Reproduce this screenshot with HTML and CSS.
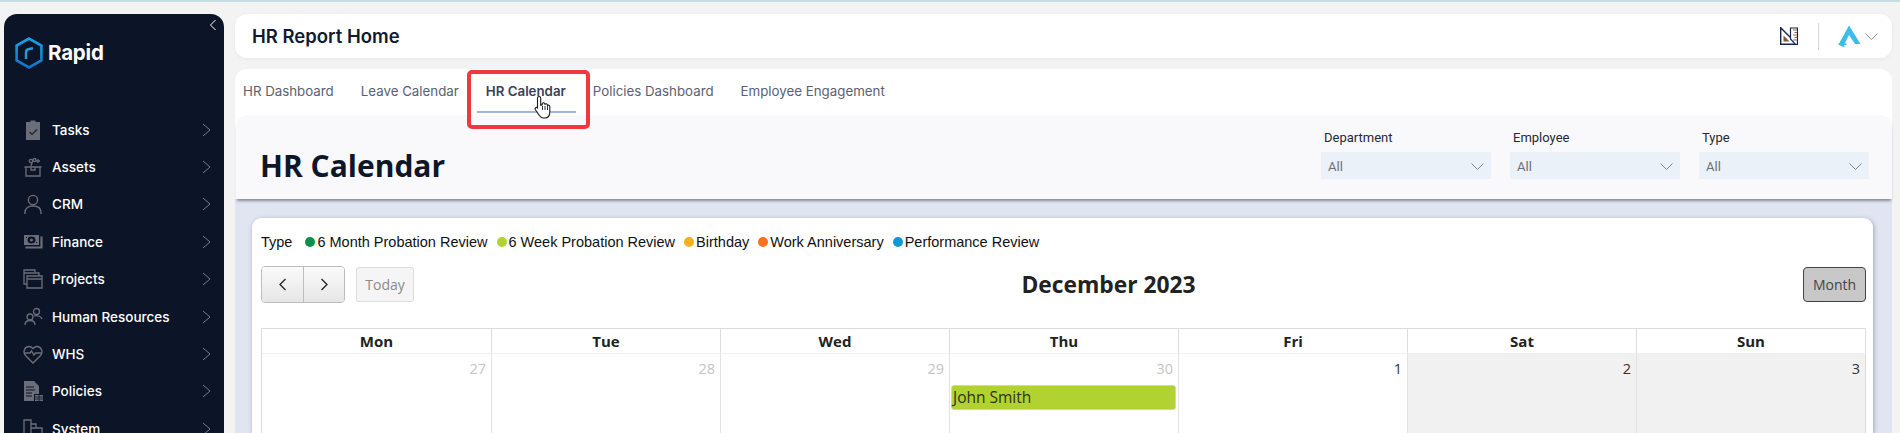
FILE: index.html
```html
<!DOCTYPE html>
<html lang="en">
<head>
<meta charset="utf-8">
<title>HR Report Home</title>
<link rel="stylesheet" href="styles.css">
</head>
<body>
<div class="app">
  <aside class="sidebar">
    <button class="collapse" aria-label="Collapse"><svg width="8" height="12" viewBox="0 0 8 12"><path d="M6.500 1 1.500 6l5 5" fill="none" stroke="#fff" stroke-width="1"/></svg></button>
    <div class="brand">
      <svg class="brand-mark" width="28" height="32" viewBox="0 0 28 32"><defs><linearGradient id="hex" x1="0" y1="0" x2="0" y2="1"><stop offset="0" stop-color="#16a4e6"/><stop offset="1" stop-color="#0f74c8"/></linearGradient></defs><polygon points="14,1.600 26.400,8.600 26.400,23.400 14,30.400 1.600,23.400 1.600,8.600" fill="none" stroke="url(#hex)" stroke-width="2.600"/><path d="M11 22v-6.500q0-3 3-3.500l4-.8" fill="none" stroke="#1b9fdd" stroke-width="2.400"/></svg>
      <span class="brand-name">Rapid</span>
    </div>
    <nav class="menu">
      <a class="menu-item"><svg class="menu-icon" viewBox="0 0 20 20"><path fill="#6b6e78" d="M3 2h4.500V.5h5V2H17v18H3z"/><path d="m6.500 12 2.500 2.500 5-5" fill="none" stroke="#1a1f2e" stroke-width="1.200"/></svg><span class="menu-label">Tasks</span><svg class="menu-arrow" viewBox="0 0 9 14"><path d="m1 1 7 6-7 6"/></svg></a>
      <a class="menu-item"><svg class="menu-icon" viewBox="0 0 20 20"><g fill="none" stroke="#6b6e78" stroke-width="1.300"><path d="M3 19v-9h14v9zM1.500 10h6M12.500 10h6M8 10v3h4v-3"/><circle cx="8" cy="4" r="1.700"/><circle cx="11.500" cy="3" r="1.500"/><path d="M9 6 8 9M15 2v4M13 4h4M3 3h.1"/></g></svg><span class="menu-label">Assets</span><svg class="menu-arrow" viewBox="0 0 9 14"><path d="m1 1 7 6-7 6"/></svg></a>
      <a class="menu-item"><svg class="menu-icon" viewBox="0 0 20 20"><g fill="none" stroke="#6b6e78" stroke-width="1.400"><circle cx="10" cy="6" r="4.600"/><path d="M2 20v-1.500c0-4 3-6.500 8-6.500s8 2.500 8 6.500V20"/></g></svg><span class="menu-label">CRM</span><svg class="menu-arrow" viewBox="0 0 9 14"><path d="m1 1 7 6-7 6"/></svg></a>
      <a class="menu-item"><svg class="menu-icon" viewBox="0 0 20 20"><path fill="#6b6e78" d="M1 3h15v10H1z"/><path fill="none" stroke="#6b6e78" stroke-width="1.200" d="M18 5h1v11H3v-1h15z"/><ellipse cx="8.500" cy="8" rx="4" ry="3.400" fill="#0c1528"/><circle cx="8.500" cy="8" r="1.500" fill="#6b6e78"/><path d="M3 5h1v1H3zM13 10h1v1h-1z" fill="#0c1528"/></svg><span class="menu-label">Finance</span><svg class="menu-arrow" viewBox="0 0 9 14"><path d="m1 1 7 6-7 6"/></svg></a>
      <a class="menu-item"><svg class="menu-icon" viewBox="0 0 20 20"><g fill="none" stroke="#6b6e78" stroke-width="1.300"><path d="M4 7h15v12H4zM4 10h15"/><path d="M4 15H1V1h11v2M1 4h15v3"/></g></svg><span class="menu-label">Projects</span><svg class="menu-arrow" viewBox="0 0 9 14"><path d="m1 1 7 6-7 6"/></svg></a>
      <a class="menu-item"><svg class="menu-icon" viewBox="0 0 20 20"><g fill="none" stroke="#6b6e78" stroke-width="1.300"><circle cx="7" cy="10" r="3"/><circle cx="13.500" cy="4.500" r="3"/><path d="M2 18c0-3 2-4.500 5-4.500s5 1.500 5 4.500M11 9c3-1 7 0 8 3"/></g></svg><span class="menu-label">Human Resources</span><svg class="menu-arrow" viewBox="0 0 9 14"><path d="m1 1 7 6-7 6"/></svg></a>
      <a class="menu-item"><svg class="menu-icon" viewBox="0 0 20 20"><g fill="none" stroke="#6b6e78" stroke-width="1.400"><path d="M10 19 2.500 11.500C-.5 8 1.500 2.500 6 2.500c2 0 3 1 4 2 1-1 2-2 4-2 4.500 0 6.500 5.500 3.500 9z"/><path d="M2 9h5l1.500-2 2.500 4 1.500-2h5.500"/></g></svg><span class="menu-label">WHS</span><svg class="menu-arrow" viewBox="0 0 9 14"><path d="m1 1 7 6-7 6"/></svg></a>
      <a class="menu-item"><svg class="menu-icon" viewBox="0 0 20 20"><path fill="#6b6e78" d="M1 0h10l5 5v8h-5v7H1z"/><path d="M3 6h8M3 9h9M3 12h6M3 15h6" stroke="#0c1528"/><path d="M12 14h8v6h-8z" fill="#6b6e78"/><path d="M12 16h8M12 18h8M16 14v6" stroke="#0c1528" stroke-width=".8"/></svg><span class="menu-label">Policies</span><svg class="menu-arrow" viewBox="0 0 9 14"><path d="m1 1 7 6-7 6"/></svg></a>
      <a class="menu-item"><svg class="menu-icon" viewBox="0 0 20 20"><g fill="none" stroke="#6b6e78" stroke-width="1.300"><path d="M1 1h7v18H1zM8 5h5v4M8 9h11v10H8"/></g></svg><span class="menu-label">System</span><svg class="menu-arrow" viewBox="0 0 9 14"><path d="m1 1 7 6-7 6"/></svg></a>
    </nav>
  </aside>

  <main class="main">
    <header class="topbar">
      <h1 class="page-title">HR Report Home</h1>
      <div class="topbar-tools">
        <svg width="18" height="18" viewBox="0 0 18 18"><path d="M.7.7 17.300 17.300H.7z" fill="#fff" stroke="#14284e" stroke-width="1.400"/><path d="M3.500 14.500h6l-6-6z" fill="#7b5a44"/><path d="M10.500 1h7v16.300h-2L10.500 12z" fill="#fff" stroke="#14284e" stroke-width="1.200"/><path d="M13 3h4M14.500 5.500H17M13 8h4M14.500 10.500H17M13 13h4" stroke="#8a6a50"/></svg>
        <span class="tool-divider"></span>
        <svg width="23" height="23" viewBox="0 0 23 23"><path d="M11 .5 22.500 19h-5.500L11 10 6.500 19 8 18l1 1.500-3 .8.700 2.200L0 19.500l1.500-1.800z" fill="#3bbcec"/></svg>
        <svg class="user-arrow" width="13" height="7" viewBox="0 0 13 7"><path d="m.5.500 6 6 6-6" fill="none" stroke="#8a8f98"/></svg>
      </div>
    </header>

    <section class="panel">
      <nav class="tabs">
        <a class="tab">HR Dashboard</a>
        <a class="tab">Leave Calendar</a>
        <a class="tab tab-active">HR Calendar
          <span class="tab-mark"></span>
          <svg class="tab-cursor" width="20" height="24" viewBox="0 0 20 24"><path d="M5 1.500c1 0 1.700.6 1.700 1.700v7l1.500-.4 0-1c0-1.500 2.300-1.500 2.500 0l.2.800c.3-1.200 2.300-1 2.500.3l.1.800c.6-1 2.300-.6 2.300.8v5.500c0 3-1.500 6-5 6H9.500c-2.500 0-3.500-1.500-4.500-3L1.300 14.500c-.8-1.500 1-2.800 2.200-1.600l0 0V3.200C3.500 2.100 4 1.500 5 1.500z" fill="#fff" stroke="#1a1a1a" stroke-width="1.100"/><path d="M8.500 11v4M11 11v4M13.500 11.500V15" stroke="#1a1a1a" stroke-width=".9"/></svg>
        </a>
        <a class="tab">Policies Dashboard</a>
        <a class="tab">Employee Engagement</a>
      </nav>

      <div class="report-head">
        <h2 class="report-title">HR Calendar</h2>
        <div class="filters">
          <div class="filter"><label class="filter-label">Department</label><div class="select"><span>All</span><svg width="13" height="7" viewBox="0 0 13 7"><path d="m.5.500 6 6 6-6" fill="none" stroke="#7d8793"/></svg></div></div>
          <div class="filter"><label class="filter-label">Employee</label><div class="select"><span>All</span><svg width="13" height="7" viewBox="0 0 13 7"><path d="m.5.500 6 6 6-6" fill="none" stroke="#7d8793"/></svg></div></div>
          <div class="filter"><label class="filter-label">Type</label><div class="select"><span>All</span><svg width="13" height="7" viewBox="0 0 13 7"><path d="m.5.500 6 6 6-6" fill="none" stroke="#7d8793"/></svg></div></div>
        </div>
      </div>

      <div class="report-body">
        <div class="card">
          <ul class="legend">
            <li class="legend-title">Type</li>
            <li class="legend-item"><i class="dot dot-green"></i>6 Month Probation Review</li>
            <li class="legend-item"><i class="dot dot-lime"></i>6 Week Probation Review</li>
            <li class="legend-item"><i class="dot dot-amber"></i>Birthday</li>
            <li class="legend-item"><i class="dot dot-orange"></i>Work Anniversary</li>
            <li class="legend-item"><i class="dot dot-blue"></i>Performance Review</li>
          </ul>

          <div class="toolbar">
            <div class="toolbar-left">
              <div class="btn-group">
                <button class="btn-nav"><svg width="9" height="13" viewBox="0 0 9 13"><path d="M7.500 1 2 6.500 7.500 12" fill="none" stroke="#222" stroke-width="1.300"/></svg></button>
                <button class="btn-nav"><svg width="9" height="13" viewBox="0 0 9 13"><path d="m1.500 1 5.500 5.500L1.500 12" fill="none" stroke="#222" stroke-width="1.300"/></svg></button>
              </div>
              <button class="btn-today">Today</button>
            </div>
            <h3 class="month-title">December 2023</h3>
            <button class="btn-month">Month</button>
          </div>

          <div class="calendar">
            <div class="day-head">Mon</div><div class="day-head">Tue</div><div class="day-head">Wed</div><div class="day-head">Thu</div><div class="day-head">Fri</div><div class="day-head">Sat</div><div class="day-head">Sun</div>
            <div class="day other">27</div>
            <div class="day other">28</div>
            <div class="day other">29</div>
            <div class="day other">30<div class="event">John Smith</div></div>
            <div class="day">1</div>
            <div class="day weekend">2</div>
            <div class="day weekend">3</div>
          </div>
        </div>
      </div>
    </section>
  </main>
</div>
</body>
</html>
```

FILE: styles.css
```css
* { box-sizing: border-box; }
html, body { margin: 0; height: 433px; overflow: hidden; }
body { background: #f3f3f3; border-top: 2px solid #c6dde3; font-family: "Liberation Sans", sans-serif; }
h1, h2, h3, ul { margin: 0; padding: 0; }
button { font: inherit; padding: 0; cursor: pointer; }

.app { display: flex; gap: 11px; height: 431px; padding: 12px 8px 0 4px; }

/* Sidebar */
.sidebar { position: relative; flex: none; width: 220px; height: 100%; overflow: hidden; background: #0c1528; border-radius: 13px 13px 0 0; padding: 23px 0 0 11px; }
.collapse { position: absolute; top: 5px; right: 7px; background: none; border: 0; line-height: 0; }
.brand { display: flex; align-items: center; gap: 5px; height: 32px; }
.brand-name { font: 700 20.500px/32px Inter, sans-serif; color: #fff; letter-spacing: -.2px; }
.menu { display: flex; flex-direction: column; margin-top: 42px; }
.menu-item { display: flex; align-items: center; flex: none; height: 37.400px; color: #fff; font: 500 13.500px Inter, sans-serif; }
.menu-icon { width: 20px; height: 20px; margin-left: 8px; flex: none; }
.menu-label { margin-left: 9px; flex: 1; }
.menu-arrow { width: 9px; height: 14px; margin-right: 13px; fill: none; stroke: #7a7d85; stroke-width: 1; }

/* Main */
.main { flex: 1; min-width: 0; display: flex; flex-direction: column; gap: 11px; }
.topbar { flex: none; display: flex; align-items: center; justify-content: space-between; height: 44px; padding: 0 14px 0 17px; background: #fff; border-radius: 12px; box-shadow: 0 1px 4px rgba(0,0,0,.05); }
.page-title { font: 600 18.500px Inter, sans-serif; color: #111a2e; }
.topbar-tools { display: flex; align-items: center; }
.tool-divider { width: 1px; height: 27px; background: #d4d4d4; margin: 0 19px 0 20px; }
.user-arrow { margin-left: 4px; }

.panel { flex: 1; min-height: 0; display: flex; flex-direction: column; background: #fff; border-radius: 12px 12px 0 0; }
.tabs { flex: none; position: relative; z-index: 2; display: flex; height: 46px; padding-left: 8px; gap: 27px; font: 400 13.300px Inter, sans-serif; color: #5a6172; }
.tab { position: relative; padding-top: 14px; white-space: nowrap; }
.tab-active { font-weight: 600; color: #3a4256; }
.tab-mark { position: absolute; left: -19px; right: -24px; top: 1px; height: 59px; border: 4px solid #f0393e; border-radius: 5px; }
.tab-mark::after { content: ""; position: absolute; left: 6px; right: 10px; bottom: 12px; height: 2px; background: #a0b4e0; }
.tab-cursor { position: absolute; left: 48px; top: 26px; }

.report-head { flex: none; position: relative; z-index: 1; display: flex; justify-content: space-between; height: 84px; padding: 0 23px 0 24px; margin-left: 1px; background: #f9f9fb; border-radius: 12px 12px 0 0; box-shadow: 0 3px 3px -1px rgba(0,0,0,.4); }
.report-title { font: 700 30px/36px "Open Sans", sans-serif; color: #0e1729; padding-top: 33px; }
.filters { display: flex; gap: 19px; padding-top: 14px; }
.filter { width: 170px; }
.filter-label { display: block; padding-left: 3px; font: 400 13px/18px Roboto, sans-serif; color: #252a33; }
.select { display: flex; align-items: center; justify-content: space-between; height: 27px; margin-top: 5px; padding: 2px 6px 0 6px; background: #ebf1f9; border: 1px solid #eef0f5; font: 400 13px Roboto, sans-serif; color: #6b7078; }

.report-body { flex: 1; min-height: 0; padding: 19px 19px 0 17px; background: #e1e5f1; }
.card { height: 100%; overflow: hidden; padding: 0 7px 0 9px; background: #fff; border-radius: 9px 9px 0 0; box-shadow: 1px 1px 4px rgba(90,100,140,.5); }

.legend { display: flex; align-items: center; height: 48px; list-style: none; font-size: 14.500px; color: #111; }
.legend-title { margin-right: 13px; }
.legend-item { display: flex; align-items: center; margin-right: 9px; white-space: nowrap; }
.dot { flex: none; width: 10px; height: 10px; border-radius: 50%; margin-right: 2px; }
.dot-green { background: #0a8f4c; }
.dot-lime { background: #b1d231; }
.dot-amber { background: #f5b11d; }
.dot-orange { background: #f97223; }
.dot-blue { background: #0f97d9; }

.toolbar { display: flex; justify-content: space-between; align-items: center; height: 37px; }
.toolbar-left { display: flex; align-items: center; gap: 11px; }
.btn-group { display: flex; height: 37px; border: 1px solid #bdbdbd; border-radius: 4px; overflow: hidden; }
.btn-nav { display: flex; align-items: center; justify-content: center; width: 41px; background: linear-gradient(#fafafa, #e6e6e6); border: 0; }
.btn-nav + .btn-nav { border-left: 1px solid #bdbdbd; }
.btn-today { width: 58px; height: 35px; background: #f5f5f5; border: 1px solid #dcdcdc; border-radius: 3px; color: #8a8a8a; font: 400 14px "Open Sans", sans-serif; }
.month-title { font: 700 22.800px "Open Sans", sans-serif; color: #222; }
.btn-month { width: 63px; height: 35px; background: #c8c8c8; border: 1px solid #444; border-radius: 4px; color: #444; font: 400 14px "Open Sans", sans-serif; }

.calendar { display: grid; grid-template-columns: repeat(7, 1fr); margin-top: 25px; border-top: 1px solid #ddd; border-left: 1px solid #ddd; border-right: 1px solid #ddd; font-family: "Open Sans", sans-serif; }
.day-head { height: 25px; font-size: 15px; font-weight: 700; line-height: 25px; text-align: center; color: #222; border-bottom: 1px solid #f0f0f0; }
.day-head + .day-head { border-left: 1px solid #ddd; }
.day { height: 110px; padding: 5px 5px 0; text-align: right; font-size: 14.500px; line-height: 20px; color: #333; border-left: 1px solid #e2e2e2; }
.day:nth-child(7n+1) { border-left: 0; }
.other { color: #c4c4c4; }
.weekend { background: #f1f1f1; }
.event { height: 25px; margin: 6px -3px 0 -4px; padding-left: 1px; background: #b1d231; border: 1px solid #cfd8b0; border-radius: 3px; text-align: left; font-size: 15.500px; line-height: 23px; color: #2c3318; }
```
